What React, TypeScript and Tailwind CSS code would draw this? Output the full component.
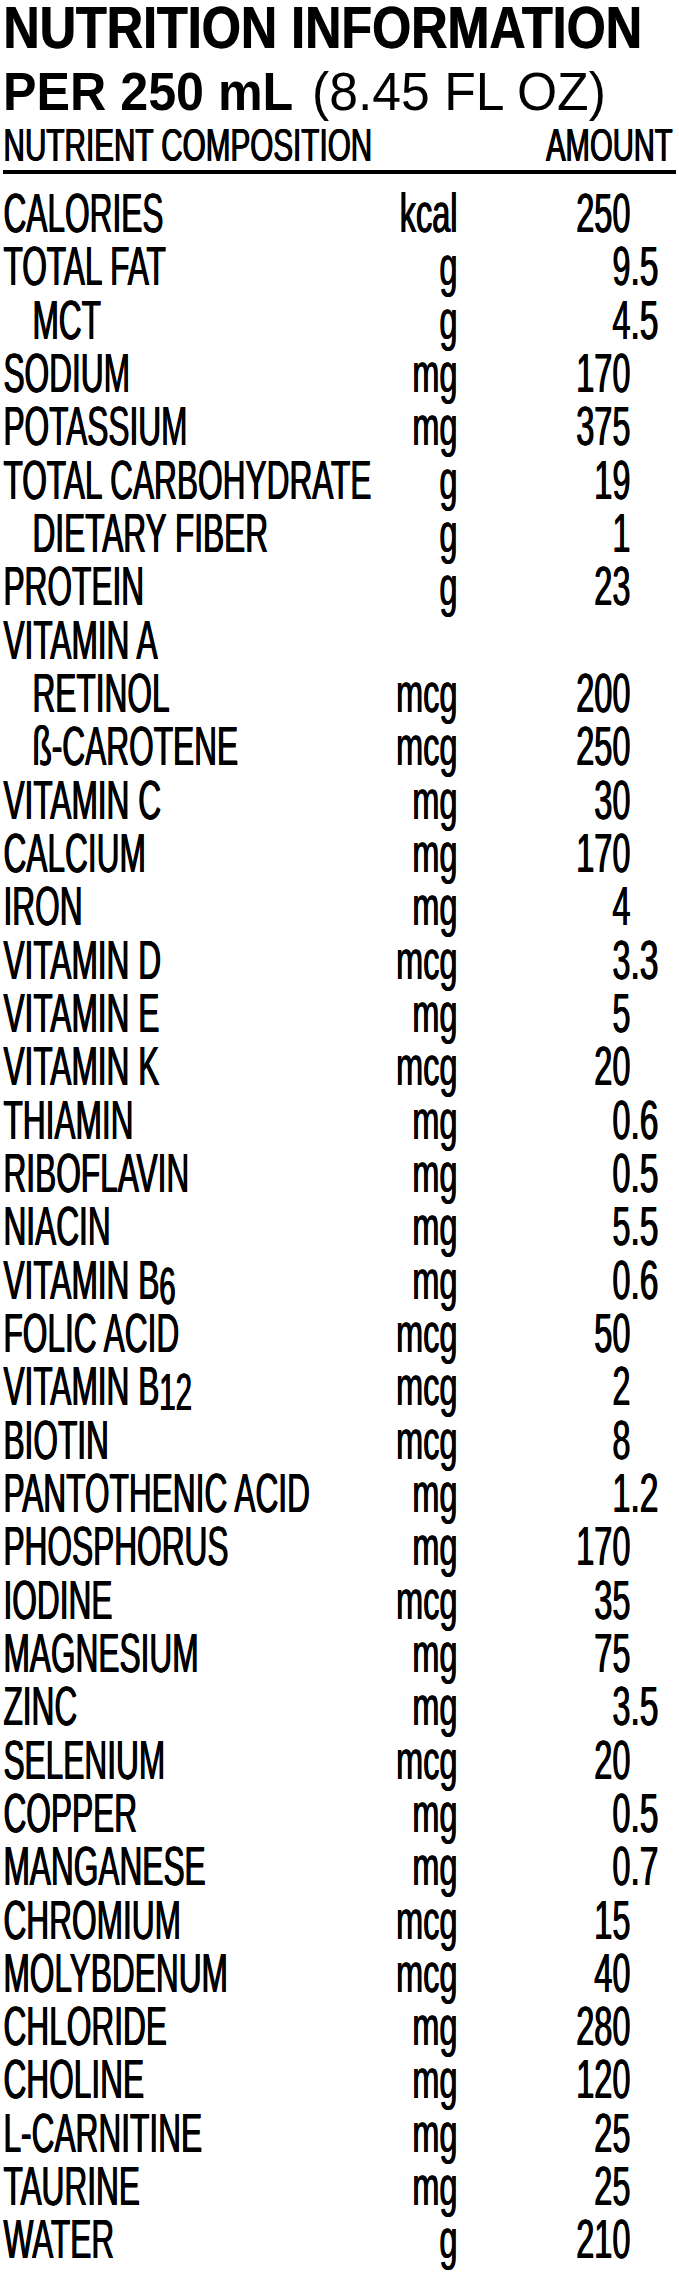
import React from "react";

type Row = { n: string; sub?: string; u?: string; a?: string; i?: boolean };

const rows: Row[] = [
  { n: "CALORIES", u: "kcal", a: "250" },
  { n: "TOTAL FAT", u: "g", a: "9.5" },
  { n: "MCT", u: "g", a: "4.5", i: true },
  { n: "SODIUM", u: "mg", a: "170" },
  { n: "POTASSIUM", u: "mg", a: "375" },
  { n: "TOTAL CARBOHYDRATE", u: "g", a: "19" },
  { n: "DIETARY FIBER", u: "g", a: "1", i: true },
  { n: "PROTEIN", u: "g", a: "23" },
  { n: "VITAMIN A" },
  { n: "RETINOL", u: "mcg", a: "200", i: true },
  { n: "ß-CAROTENE", u: "mcg", a: "250", i: true },
  { n: "VITAMIN C", u: "mg", a: "30" },
  { n: "CALCIUM", u: "mg", a: "170" },
  { n: "IRON", u: "mg", a: "4" },
  { n: "VITAMIN D", u: "mcg", a: "3.3" },
  { n: "VITAMIN E", u: "mg", a: "5" },
  { n: "VITAMIN K", u: "mcg", a: "20" },
  { n: "THIAMIN", u: "mg", a: "0.6" },
  { n: "RIBOFLAVIN", u: "mg", a: "0.5" },
  { n: "NIACIN", u: "mg", a: "5.5" },
  { n: "VITAMIN B", sub: "6", u: "mg", a: "0.6" },
  { n: "FOLIC ACID", u: "mcg", a: "50" },
  { n: "VITAMIN B", sub: "12", u: "mcg", a: "2" },
  { n: "BIOTIN", u: "mcg", a: "8" },
  { n: "PANTOTHENIC ACID", u: "mg", a: "1.2" },
  { n: "PHOSPHORUS", u: "mg", a: "170" },
  { n: "IODINE", u: "mcg", a: "35" },
  { n: "MAGNESIUM", u: "mg", a: "75" },
  { n: "ZINC", u: "mg", a: "3.5" },
  { n: "SELENIUM", u: "mcg", a: "20" },
  { n: "COPPER", u: "mg", a: "0.5" },
  { n: "MANGANESE", u: "mg", a: "0.7" },
  { n: "CHROMIUM", u: "mcg", a: "15" },
  { n: "MOLYBDENUM", u: "mcg", a: "40" },
  { n: "CHLORIDE", u: "mg", a: "280" },
  { n: "CHOLINE", u: "mg", a: "120" },
  { n: "L-CARNITINE", u: "mg", a: "25" },
  { n: "TAURINE", u: "mg", a: "25" },
  { n: "WATER", u: "g", a: "210" },
];

function NutrientRow({ r }: { r: Row }) {
  const amt = r.a ?? "";
  const dot = amt.indexOf(".");
  const intPart = dot >= 0 ? amt.slice(0, dot) : amt;
  const fracPart = dot >= 0 ? amt.slice(dot) : "";
  return (
    <div className="flex h-[53.333px] text-[56px] leading-[53.333px] whitespace-nowrap">
      <div className={"w-[334px] shrink-0 min-w-0 " + (r.i ? "pl-[29px]" : "")}>
        <div className="origin-left scale-x-[0.565]">
          {r.n}
          {r.sub && <span className="relative top-[5px] text-[52px]">{r.sub}</span>}
        </div>
      </div>
      <div className="w-[120px] shrink-0 min-w-0 text-right origin-right scale-x-[0.58]">{r.u ?? ""}</div>
      <div className="w-[173px] shrink-0 min-w-0 text-right origin-right scale-x-[0.58]">{intPart}</div>
      <div className="w-[46px] shrink-0 min-w-0 text-left origin-left scale-x-[0.6]">{fracPart}</div>
    </div>
  );
}

export default function App() {
  return (
    <div
      className="w-[679px] min-h-[2272px] bg-white text-black pl-[3px] overflow-hidden"
      style={{ fontFamily: '"Liberation Sans", Arial, sans-serif' }}
    >
      <div className="w-[673px]">
        <div className="h-[56px] text-[60px] leading-[56px] font-bold whitespace-nowrap [text-shadow:1px_0_0_#000]">
          <div className="origin-left scale-x-[0.838]">NUTRITION INFORMATION</div>
        </div>
        <div className="flex items-baseline h-[70px] leading-[70px] whitespace-nowrap">
          <div className="w-[309px] shrink-0 text-[54px] font-bold">
            <div className="origin-left scale-x-[0.93]">PER 250 mL</div>
          </div>
          <div className="text-[53px] font-normal">
            <div className="origin-left scale-x-[0.975]">(8.45 FL OZ)</div>
          </div>
        </div>
        <div className="flex h-[41px] text-[46px] leading-[38px] whitespace-nowrap [text-shadow:0.8px_0_0_#000,1.6px_0_0_#000]">
          <div className="w-[400px] shrink-0 origin-left scale-x-[0.645]">NUTRIENT COMPOSITION</div>
          <div className="flex-1 text-right pr-[6px] origin-right scale-x-[0.635]">AMOUNT</div>
        </div>
        <div className="mt-[3px] h-[4px] w-[673px] bg-black" />
        <div className="mt-[12px] [text-shadow:0.8px_0_0_#000,1.6px_0_0_#000]">
          {rows.map((r, idx) => (
            <NutrientRow key={idx} r={r} />
          ))}
        </div>
      </div>
    </div>
  );
}
